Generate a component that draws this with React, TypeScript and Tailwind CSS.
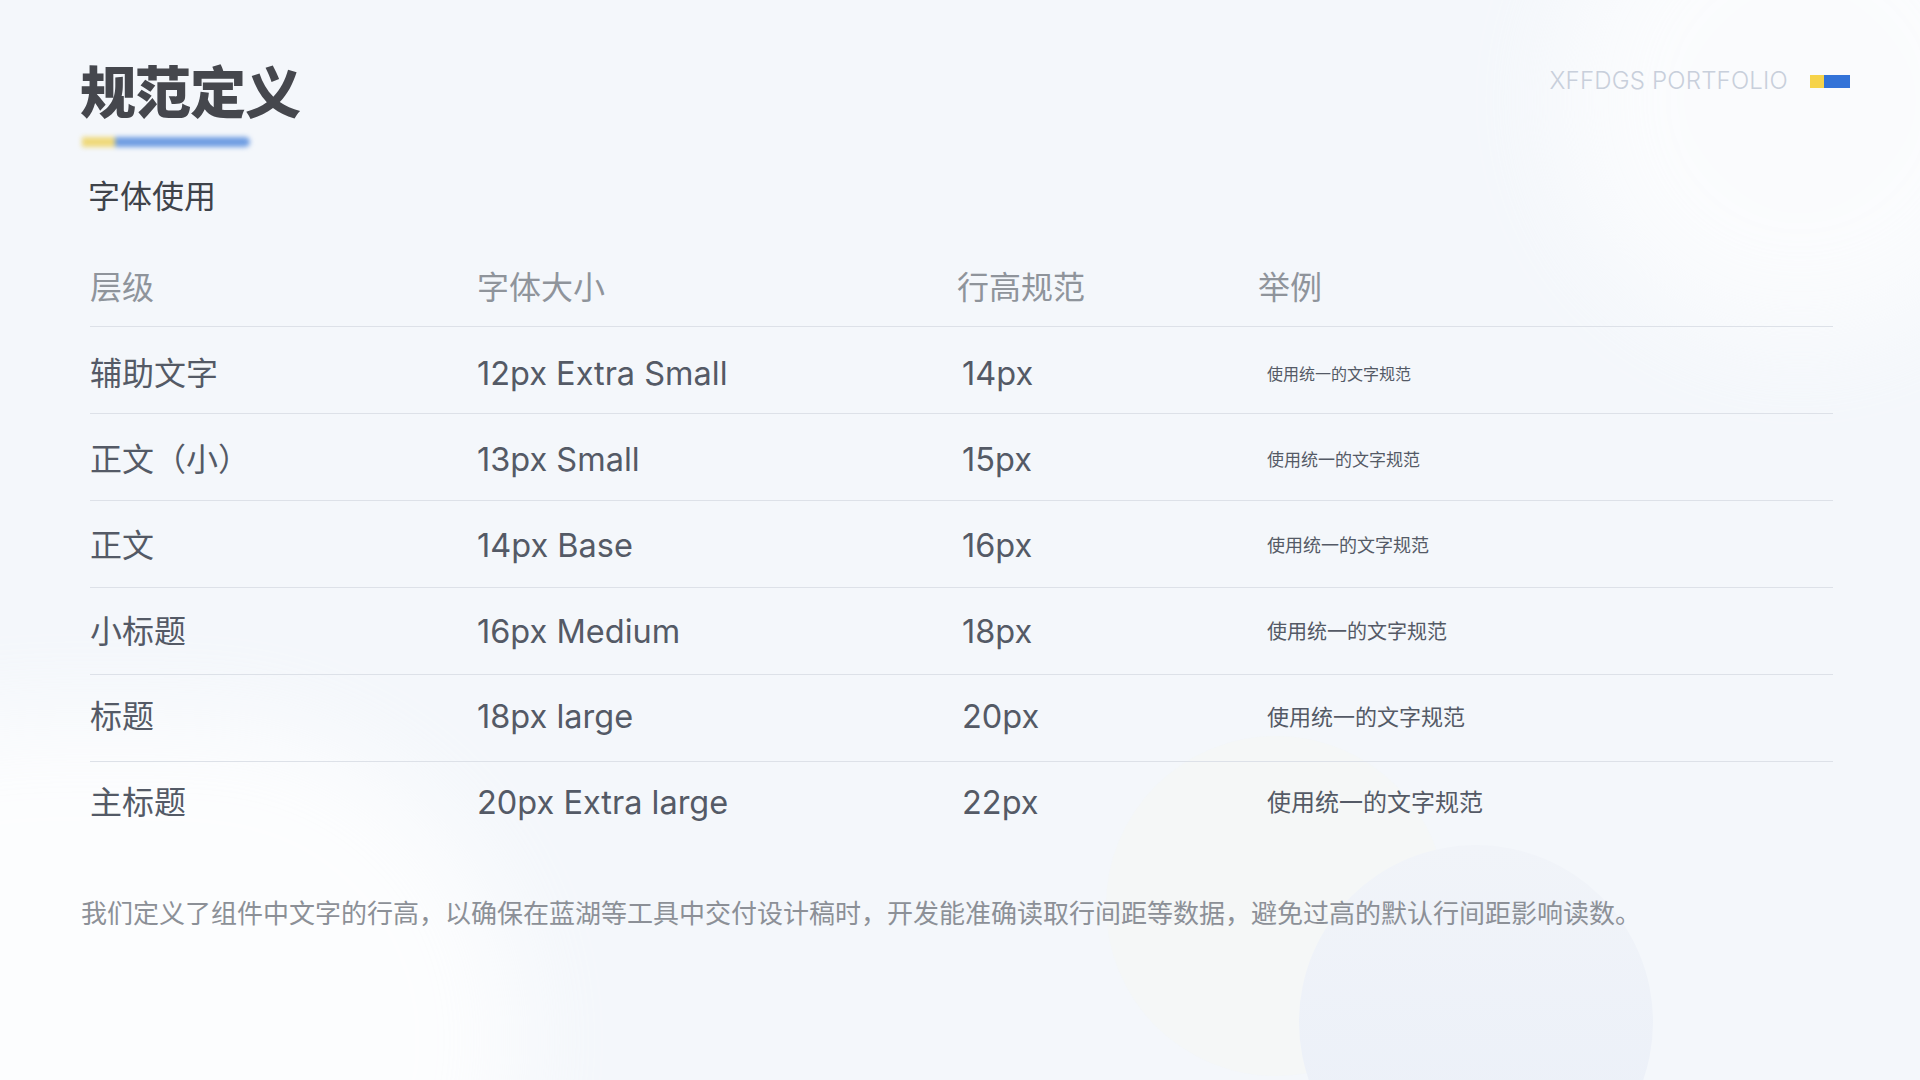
import React from "react";

const rows = [
  { level: "辅助文字", size: "12px Extra Small", lh: "14px", ex: "text-[16px]", pad: "pt-[8px]" },
  { level: "正文（小）", size: "13px Small", lh: "15px", ex: "text-[17px]", pad: "pt-[6px]" },
  { level: "正文", size: "14px Base", lh: "16px", ex: "text-[18px]", pad: "pt-[3px]" },
  { level: "小标题", size: "16px Medium", lh: "18px", ex: "text-[20px]", pad: "pt-[1px]" },
  { level: "标题", size: "18px large", lh: "20px", ex: "text-[22px]", pad: "pb-[2px]" },
  { level: "主标题", size: "20px Extra large", lh: "22px", ex: "text-[24px]", pad: "pb-[6px]" },
];

export default function App() {
  return (
    <div className="relative w-[1920px] h-[1080px] overflow-hidden bg-[#f4f7fb] font-['Inter','Noto_Sans_CJK_SC',sans-serif]">
      {/* decorative background */}
      <div className="pointer-events-none absolute left-[-300px] top-[720px] w-[820px] h-[640px] rounded-full bg-white opacity-75 blur-[50px]" />
      <div className="pointer-events-none absolute left-[1560px] top-[-140px] w-[480px] h-[480px] rounded-full bg-white opacity-60 blur-[50px]" />
      <div className="pointer-events-none absolute left-[1106px] top-[736px] w-[340px] h-[340px] rounded-full bg-[#f6f7f3] opacity-50" />
      <div className="pointer-events-none absolute left-[1299px] top-[845px] w-[354px] h-[354px] rounded-full bg-gradient-to-b from-[#f1f4f9] to-[#eaeff8]" />

      <div className="relative flex flex-col pl-[80px] pt-[65px]">
        <div className="flex items-start justify-between pr-[70px]">
          <div className="flex flex-col">
            <h1 className="text-[56px] leading-[56px] font-black text-[#45474d] tracking-[-1px]">规范定义</h1>
            <div className="mt-[16px] ml-[2px] flex h-[10px] blur-[2.5px]">
              <div className="w-[33px] h-full bg-[#efd97a]" />
              <div className="w-[135px] h-full bg-[#6f9de2] rounded-r-full" />
            </div>
          </div>
          <div className="mt-[4px] flex items-center gap-[22px]">
            <span className="text-[24px] leading-[24px] font-light text-[#c8cfdb] tracking-[0.2px]">XFFDGS PORTFOLIO</span>
            <div className="flex h-[13px]">
              <div className="w-[14px] h-full bg-[#f6d34a]" />
              <div className="w-[26px] h-full bg-[#3373d8]" />
            </div>
          </div>
        </div>

        <div className="mt-[34px] ml-[8px] text-[32px] leading-[32px] text-[#3f434a]">字体使用</div>

        <div className="mt-[36px] ml-[10px] w-[1743px] flex flex-col">
          <div className="grid grid-cols-[387px_480px_301px_1fr] h-[78px] items-center border-b border-[#dde1e8] text-[32px] leading-[32px] text-[#8f949b]">
            <div>层级</div>
            <div>字体大小</div>
            <div>行高规范</div>
            <div>举例</div>
          </div>
          {rows.map((r, i) => (
            <div
              key={r.level}
              className={`grid grid-cols-[387px_480px_301px_1fr] h-[87px] items-center text-[#545a66] ${r.pad} ${
                i < rows.length - 1 ? "border-b border-[#dde1e8]" : ""
              }`}
            >
              <div className="text-[32px] leading-[32px]">{r.level}</div>
              <div className="text-[32.5px] leading-[32px]">{r.size}</div>
              <div className="text-[32.5px] leading-[32px] pl-[5px]">{r.lh}</div>
              <div className={`${r.ex} leading-none pl-[9px]`}>使用统一的文字规范</div>
            </div>
          ))}
        </div>

        <p className="mt-[52px] ml-[1px] text-[26px] leading-[26px] text-[#8c9097]">
          我们定义了组件中文字的行高，以确保在蓝湖等工具中交付设计稿时，开发能准确读取行间距等数据，避免过高的默认行间距影响读数。
        </p>
      </div>
    </div>
  );
}
